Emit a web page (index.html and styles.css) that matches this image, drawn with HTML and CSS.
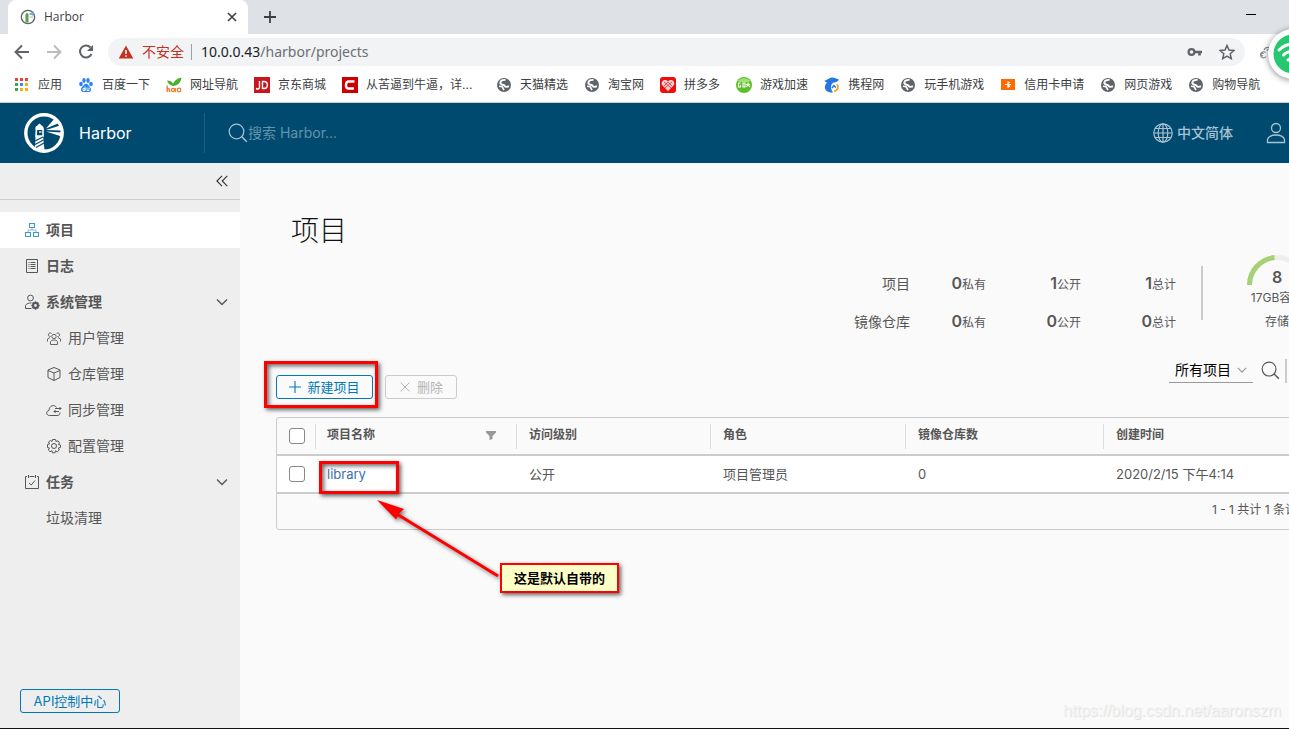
FILE: index.html
```html
<!DOCTYPE html>
<html lang="zh-CN">
<head>
<meta charset="utf-8">
<title>Harbor</title>
<link rel="stylesheet" href="styles.css">
</head>
<body>
<svg class="defs" width="0" height="0" aria-hidden="true">
  <symbol id="globe-solid" viewBox="0 0 16 16">
    <circle cx="8" cy="8" r="7" fill="#5f6368"/>
    <path d="M9.500 3C7 2.500 4.500 3.800 4.300 5.800 4.200 7.500 6 7.800 7.500 8c1.500.3 1.200 1.800 2.500 1.900 1 .1 2-.7 3-.4" fill="none" stroke="#fff" stroke-width="1.900"/>
    <path d="M3 9.300c1.500 0 3.500.2 3.700 1.200.2.900.6 1.300 1.300 2.700" fill="none" stroke="#fff" stroke-width="1.600"/>
  </symbol>
  <symbol id="chevron" viewBox="0 0 12 12"><path d="M1 3.500l5 5 5-5" fill="none" stroke="currentColor" stroke-width="1.400"/></symbol>
  <symbol id="magnifier" viewBox="0 0 20 20"><circle cx="8.500" cy="8.500" r="7.300" fill="none" stroke="currentColor" stroke-width="1.200"/><path d="M13.800 13.800l5 5" stroke="currentColor" stroke-width="1.500"/></symbol>
</svg>

<header class="tabstrip">
  <div class="tab">
    <svg width="16" height="16" viewBox="0 0 16 16"><circle cx="8" cy="8" r="6.700" fill="#fff" stroke="#5b6468" stroke-width="1.300"/><path d="M5.500 5.500l1.500-2 1.500 2v8h-3z" fill="#60a043"/><path d="M9 4.500l4.500-1.500 1 4-5-1.500z" fill="#7ba8c9"/><path d="M9.500 8h4" stroke="#9fc0d6"/></svg>
    <span class="tab-title">Harbor</span>
    <button class="plain" aria-label="关闭标签页"><svg width="10" height="10" viewBox="0 0 10 10"><path d="M1 1l8 8M9 1l-8 8" stroke="#3c4043" stroke-width="1.600"/></svg></button>
  </div>
  <button class="plain new-tab" aria-label="新标签页"><svg width="12" height="12" viewBox="0 0 12 12"><path d="M6 0v12M0 6h12" stroke="#3c4043" stroke-width="1.800"/></svg></button>
  <button class="plain minimize" aria-label="最小化"><svg width="10" height="10" viewBox="0 0 10 10"><path d="M0 2.500h10" stroke="#000"/></svg></button>
</header>

<div class="toolbar">
  <button class="plain" aria-label="后退"><svg width="16" height="16" viewBox="0 0 16 16"><path d="M15 8H2M8 1.500L1.500 8 8 14.500" fill="none" stroke="#5f6368" stroke-width="1.900"/></svg></button>
  <button class="plain" aria-label="前进"><svg width="16" height="16" viewBox="0 0 16 16"><path d="M1 8h13M8 1.500L14.500 8 8 14.500" fill="none" stroke="#babcbe" stroke-width="1.900"/></svg></button>
  <button class="plain" aria-label="重新加载"><svg width="16" height="16" viewBox="0 0 16 16"><path d="M13.500 10a6 6 0 1 1-1-6.500" fill="none" stroke="#5f6368" stroke-width="2"/><path d="M15 1v6H9z" fill="#5f6368"/></svg></button>
  <div class="omnibox">
    <svg width="16" height="16" viewBox="0 0 16 16"><path d="M8 1.500L15.300 14.500H.7z" fill="#c5301f"/><path d="M8 6v4M8 11.300v1.500" stroke="#fff" stroke-width="1.500"/></svg>
    <span class="insecure">不安全</span>
    <span class="url"><span class="host">10.0.0.43</span>/harbor/projects</span>
    <svg class="key" width="16" height="16" viewBox="0 0 16 16"><circle cx="4.500" cy="8" r="2.900" fill="none" stroke="#5f6368" stroke-width="2.200"/><path d="M7 8h8M12.500 8v3.500" stroke="#5f6368" stroke-width="2.600"/></svg>
    <svg width="16" height="16" viewBox="0 0 16 16"><path d="M8 1.500l2 4.500 4.900.5-3.700 3.300 1.100 4.900L8 12.200l-4.300 2.500 1.100-4.900L1.100 6.500 6 6z" fill="none" stroke="#5f6368" stroke-width="1.500"/></svg>
  </div>
  <svg class="extension" width="20" height="16" viewBox="0 0 20 16"><path d="M9 12.500a3 3 0 1 1-.5-4M6 11.500a1.200 1.200 0 1 1 .5-1.500M7 6a4 4 0 0 1 7.500 0M10 7a2 2 0 1 1 2 2" fill="none" stroke="#8b8d90" stroke-width="1.200"/></svg>
</div>

<nav class="bookmarks" aria-label="书签">
  <a href="#"><svg width="16" height="16" viewBox="0 0 16 16"><path d="M1 1h3v3H1zM6 1h3v3H6zM1 6h3v3H1z" fill="#ea4335"/><path d="M11 1h3v3h-3z" fill="#ea4335"/><path d="M6 11h3v3H6zM11 11h3v3h-3zM11 6h3v3h-3z" fill="#fbae04"/><path d="M6 6h3v3H6z" fill="#4285f4"/><path d="M1 6h3v3H1zM1 11h3v3H1z" fill="#34a853"/></svg>应用</a>
  <a href="#"><svg width="16" height="16" viewBox="0 0 16 16" fill="#2b84f0"><ellipse cx="3" cy="7" rx="1.800" ry="2.300"/><ellipse cx="6" cy="3.500" rx="1.700" ry="2.400"/><ellipse cx="10" cy="3.500" rx="1.700" ry="2.400"/><ellipse cx="13" cy="7" rx="1.800" ry="2.300"/><path d="M8 6.700c2 0 2.500 2 4 3.500 2 2 1 5-1.500 4.800H5.500C3 15 2 12 4 10.200 5.500 8.700 6 6.700 8 6.700z"/><path d="M5 11.500h2v2H5zM7 9.500v4M9 10.500v3h2v-3" fill="none" stroke="#fff" stroke-width=".9"/></svg>百度一下</a>
  <a href="#"><svg width="16" height="16" viewBox="0 0 16 16"><path d="M7 9C4 8.500 2 6.500 1 3.500c3 0 5 1 6 3C9 3 11.500 1 15.500.5 15 5 12 9 7 9z" fill="#4faf2f"/><path d="M1.200 8.500v6.500M1.200 12.500c.8-1.500 2.300-1 2.300.5v2M9.200 11v4" fill="none" stroke="#f47a2b" stroke-width="1.400"/><circle cx="7" cy="13" r="1.600" fill="none" stroke="#f47a2b" stroke-width="1.300"/><circle cx="13" cy="13" r="1.800" fill="none" stroke="#f47a2b" stroke-width="1.300"/></svg>网址导航</a>
  <a href="#"><svg width="16" height="16" viewBox="0 0 16 16"><path d="M0 0h16v16H0z" fill="#c9151e"/><path d="M5.500 4v6c0 2-1.500 2.500-3.500 1.500M8.500 4.500v7H10c4.500 0 4.500-7 0-7z" fill="none" stroke="#fff" stroke-width="1.400"/></svg>京东商城</a>
  <a class="wide" href="#"><svg width="16" height="16" viewBox="0 0 16 16"><path d="M0 0h16v16H0z" fill="#c00"/><path d="M12.500 4.500H6.500C3.500 4.500 3 11.500 6 11.500h6" fill="none" stroke="#fff" stroke-width="2.400"/></svg>从苦逼到牛逼，详...</a>
  <a href="#"><svg width="16" height="16"><use href="#globe-solid"/></svg>天猫精选</a>
  <a href="#"><svg width="16" height="16"><use href="#globe-solid"/></svg>淘宝网</a>
  <a href="#"><svg width="16" height="16" viewBox="0 0 16 16"><rect width="16" height="16" rx="3" fill="#f20d0d"/><path d="M8 14L2 8c-1.500-4 3-7 6-3.500C11 1 15.500 4 14 8z" fill="#fbd5d5"/><path d="M4 5l7 6M8 5l4 4M12 5l-7 6M8 5L4 9" stroke="#e33" stroke-width=".9"/></svg>拼多多</a>
  <a href="#"><svg width="16" height="16" viewBox="0 0 16 16"><circle cx="8" cy="8" r="8" fill="#5cc02b"/><path d="M2 3.500Q8-1 14 3.500L13 5H3z" fill="#a3e070"/><path d="M4.500 6H2.500v4h2V8M7 6v4h2V6zM12 5.500v2L10.500 10M10 7.500h4M12 7.500l2 2.500" fill="none" stroke="#fff" stroke-width="1.100"/></svg>游戏加速</a>
  <a href="#"><svg width="16" height="16" viewBox="0 0 16 16"><path d="M.5 3.500C3 3.500 4 1 8 .5c3 0 4.500 1.500 7 2-1 2-3 3-5 3C6.500 6.500 6 11 9 15.500 4 16 0 13 1 9c.3-1.500 1.500-2.500 2-3.500-1 0-2-.8-2.500-2z" fill="#2577e3"/><path d="M8 11l2-2.500 2 2" fill="none" stroke="#2577e3" stroke-width="1.500"/><path d="M13 7c2 3 1 6-3 7.500" fill="none" stroke="#f5a623" stroke-width="1.800"/></svg>携程网</a>
  <a href="#"><svg width="16" height="16"><use href="#globe-solid"/></svg>玩手机游戏</a>
  <a href="#"><svg width="16" height="16" viewBox="0 0 16 16"><path d="M1 2h14v11H1z" fill="#ff6a00"/><path d="M8 4.500v6.500M5 7.500h6M8 5.500h2M8 8l2 1.500" stroke="#fff" stroke-width="1.100"/></svg>信用卡申请</a>
  <a href="#"><svg width="16" height="16"><use href="#globe-solid"/></svg>网页游戏</a>
  <a href="#"><svg width="16" height="16"><use href="#globe-solid"/></svg>购物导航</a>
</nav>

<header class="app-header">
  <a class="brand" href="#">
    <svg width="40" height="40" viewBox="0 0 40 40"><circle cx="20" cy="20" r="18.200" fill="none" stroke="#fff" stroke-width="3.400"/><path d="M15.500 10.500l4 3.500v3h-8v-3z" fill="#fff"/><path d="M12.500 16h6.500v7h-7z" fill="none" stroke="#fff" stroke-width="1.600"/><path d="M15 19h2.500" stroke="#fff" stroke-width="1.300"/><path d="M11.500 23H19l1.500 14-9.500-1z" fill="#fff"/><path d="M11 28l8-4M11 31.500l8.500-4.500M12 34.500l8-4.500" stroke="#004a70" stroke-width="1.200"/><path d="M22 15.500L31 5l4 5zM22 17l14-4.500 1.500 5zM22 18.500l15.500 1v4z" fill="#fff"/></svg>
    <span class="brand-name">Harbor</span>
  </a>
  <label class="search">
    <svg width="20" height="20"><use href="#magnifier"/></svg>
    <input type="text" placeholder="搜索 Harbor..." aria-label="搜索 Harbor">
  </label>
  <button class="plain header-btn"><svg width="20" height="20" viewBox="0 0 20 20"><g fill="none" stroke="currentColor" stroke-width="1.200"><circle cx="10" cy="10" r="9.200"/><ellipse cx="10" cy="10" rx="4.800" ry="9.200"/><path d="M10 1v18M1 10h18M2.500 5.500h15M2.500 14.500h15"/></g></svg>中文简体</button>
  <button class="plain header-btn user" aria-label="用户"><svg width="20" height="22" viewBox="0 0 20 22"><g fill="none" stroke="currentColor" stroke-width="1.300"><circle cx="10" cy="6" r="4.500"/><path d="M1.500 20.500v-3c1-3 4.500-4.500 8.500-4.500s7.500 1.500 8.500 4.500v3z"/></g></svg></button>
</header>

<div class="workspace">
  <aside class="sidebar">
    <button class="plain collapse" aria-label="收起"><svg width="12" height="12" viewBox="0 0 12 12"><path d="M6 .8L.9 6 6 11.200M11.300.8L6.200 6l5.100 5.200" fill="none" stroke="#333" stroke-width="1.100"/></svg></button>
    <nav class="menu">
      <a class="item active" href="#"><svg width="16" height="16" viewBox="0 0 16 16"><g fill="none" stroke="#3f97c9" stroke-width="1.100"><path d="M5.500 1.500h5v4h-5zM1.500 10.500h5v4h-5zM9.500 10.500h5v4h-5z"/><path d="M8 5.500V8M4 10.500V8h8v2.500" opacity=".6"/></g></svg>项目</a>
      <a class="item" href="#"><svg width="16" height="16" viewBox="0 0 16 16"><g fill="none" stroke="currentColor"><path d="M2.500 1.500h11v13h-11z"/><path d="M4.500 4.500h1M6.500 4.500h5M4.500 6.500h1M6.500 6.500h5M4.500 8.500h1M6.500 8.500h5M4.500 10.500h1M6.500 10.500h5"/></g></svg>日志</a>
      <a class="item" href="#"><svg width="16" height="16" viewBox="0 0 16 16"><circle cx="6.500" cy="4" r="2.900" fill="none" stroke="currentColor"/><path d="M7.500 14.500h-6v-3C2.500 9.500 5 8.800 7.500 9" fill="none" stroke="currentColor"/><circle cx="11.500" cy="11.500" r="2.400" fill="none" stroke="currentColor" stroke-width="2"/><path d="M11.500 7.300v2M11.500 13.700v2M7.300 11.500h2M13.700 11.500h2M8.600 8.600l1.300 1.300M13.100 13.100l1.300 1.300M14.400 8.600l-1.300 1.300M9.900 13.100l-1.300 1.300" stroke="currentColor" stroke-width="1.500"/></svg><span>系统管理</span><svg class="caret" width="12" height="12"><use href="#chevron"/></svg></a>
      <a class="item sub" href="#"><svg width="16" height="16" viewBox="0 0 16 16"><g fill="none" stroke="currentColor" stroke-width=".9"><circle cx="8" cy="6.500" r="2.200"/><path d="M4.500 14.500v-3c1.500-2 5.500-2 7 0v3zM5.500 3.500A1.800 1.800 0 1 0 4.500 6.500M10.500 3.500a1.800 1.800 0 1 1 1 3M1.500 11.500V9L4 7.500M14.500 11.500V9L12 7.500"/></g></svg>用户管理</a>
      <a class="item sub" href="#"><svg width="16" height="16" viewBox="0 0 16 16"><path d="M8 1.500l6 2.500v7.500L8 14.500l-6-3V4zM2 4.500L8 7l6-2.500M8 7v7.500" fill="none" stroke="currentColor"/></svg>仓库管理</a>
      <a class="item sub" href="#"><svg width="16" height="16" viewBox="0 0 16 16"><path d="M14 10.500c0 2-1 3-3 3H3.500C0 13.500-.3 9 3 8.500 3 3.500 8.500 2 10.500 5.500M9 6.500h6M13.500 5L15 6.500 13.500 8M13 9.500H8M9.500 8L8 9.500 9.500 11" fill="none" stroke="currentColor"/></svg>同步管理</a>
      <a class="item sub" href="#"><svg width="16" height="16" viewBox="0 0 16 16"><g fill="none" stroke="currentColor"><circle cx="8" cy="8" r="2.500"/><path d="M6.500 1.500h3l.5 2 2-.7 1.500 2L12.300 6.500l2.200.5v2.500l-2.200.5 1 2-2 1.800-1.800-1-.5 2H6.500L6 12.700l-2 1L2.300 12l1.200-2-2-.5v-3l2-.5-1-2L4.500 2.500 6 3.500z"/></g></svg>配置管理</a>
      <a class="item" href="#"><svg width="16" height="16" viewBox="0 0 16 16"><path d="M3 2.500H1.500v12h13v-12H13M5.500 2.500h5M4.500 1v3M11.500 1v3M5 9l2.200 2L11 6.500" fill="none" stroke="currentColor"/></svg><span>任务</span><svg class="caret" width="12" height="12"><use href="#chevron"/></svg></a>
      <a class="item leaf" href="#">垃圾清理</a>
    </nav>
    <button class="btn api">API控制中心</button>
  </aside>

  <main class="content">
    <h1>项目</h1>
    <section class="stats">
      <dl class="counts">
        <dt>项目</dt><dd><b>0</b>私有</dd><dd><b>1</b>公开</dd><dd><b>1</b>总计</dd>
        <dt>镜像仓库</dt><dd><b>0</b>私有</dd><dd><b>0</b>公开</dd><dd><b>0</b>总计</dd>
      </dl>
      <div class="quota">
        <div class="gauge">
          <svg width="60" height="30" viewBox="0 0 60 30"><path d="M2.500 30a27.500 27.500 0 0 1 55 0" fill="none" stroke="#eee" stroke-width="5"/><path d="M2.500 30A27.500 27.500 0 0 1 27.500 2.600" fill="none" stroke="#a5d274" stroke-width="5"/></svg>
          <b class="gauge-value">8</b>
        </div>
        <span>17GB容量</span>
        <span class="quota-name">存储</span>
      </div>
    </section>

    <div class="actions">
      <button class="btn"><svg width="12" height="12" viewBox="0 0 12 12"><path d="M6 0v12M0 6h12" stroke="currentColor" stroke-width="1.100"/></svg>新建项目</button>
      <button class="btn" disabled><svg width="12" height="12" viewBox="0 0 12 12"><path d="M1.500 1.500l9 9M10.500 1.500l-9 9" stroke="currentColor"/></svg>删除</button>
      <div class="filters">
        <label class="picker">
          <select aria-label="项目范围"><option>所有项目</option></select>
          <svg width="10" height="10"><use href="#chevron"/></svg>
        </label>
        <button class="plain find" aria-label="搜索"><svg width="19" height="19"><use href="#magnifier"/></svg></button>
      </div>
    </div>

    <div class="grid">
      <table>
        <colgroup><col class="c-check"><col class="c-name"><col class="c-access"><col class="c-role"><col class="c-repos"><col></colgroup>
        <thead>
          <tr>
            <th><input type="checkbox" aria-label="全选"></th>
            <th><div class="head">项目名称<svg class="funnel" width="10" height="9" viewBox="0 0 10 9"><path d="M0 0h10v1.500L6.500 5v3L3.500 9V5L0 1.500z" fill="#999"/></svg></div></th>
            <th><div class="head">访问级别</div></th>
            <th><div class="head">角色</div></th>
            <th><div class="head">镜像仓库数</div></th>
            <th><div class="head">创建时间</div></th>
          </tr>
        </thead>
        <tbody>
          <tr>
            <td><input type="checkbox" aria-label="选择 library"></td>
            <td><a href="#">library</a></td>
            <td>公开</td>
            <td>项目管理员</td>
            <td>0</td>
            <td>2020/2/15 下午4:14</td>
          </tr>
        </tbody>
      </table>
      <div class="grid-footer">1 - 1 共计 1 条记录</div>
    </div>
  </main>
</div>

<div class="mark mark-create"></div>
<div class="mark mark-library"></div>
<svg class="arrow" width="130" height="90" viewBox="0 0 130 90"><path d="M20 13.500L122 76" stroke="#f00" stroke-width="3"/><path d="M1 0l27 9-5 4.500-3 6z" fill="#f00"/></svg>
<div class="note">这是默认自带的</div>
<div class="watermark">https://blog.csdn.net/aaronszm</div>
<svg class="wifi" width="50" height="50" viewBox="0 0 50 50"><circle cx="25" cy="25" r="25" fill="#fff"/><circle cx="25" cy="25" r="19.500" fill="#27c76f"/><path d="M11 21c8-8 20-8 28 0M15.500 26c5.500-5.500 13.500-5.500 19 0M20 31c3-3 7-3 10 0" fill="none" stroke="#fff" stroke-width="3" stroke-linecap="round"/></svg>
</body>
</html>
```
FILE: styles.css
```css
* { box-sizing: border-box; }

body {
  position: relative;
  display: flex;
  flex-direction: column;
  min-height: 100vh;
  margin: 0;
  overflow: hidden;
  border-bottom: 1px solid #111;
  background: #fafafa;
  color: #565656;
  font: 14px/20px Inter, "Noto Sans CJK SC", sans-serif;
  white-space: nowrap;
}

svg { flex: none; display: block; }
a { color: inherit; text-decoration: none; }
.defs { position: absolute; }

.plain {
  display: flex;
  align-items: center;
  padding: 0;
  border: 0;
  background: none;
  color: inherit;
  font: inherit;
}

/* Browser chrome */
.tabstrip {
  display: flex;
  align-items: center;
  height: 34px;
  padding: 0 33px 0 8px;
  background: #dee1e6;
}
.tab {
  display: flex;
  align-items: center;
  gap: 8px;
  width: 240px;
  height: 34px;
  padding: 0 11px 0 12px;
  border-radius: 8px 8px 0 0;
  background: #fff;
  color: #3c4043;
  font: 12px/16px "Open Sans", sans-serif;
}
.tab-title { flex: 1; }
.new-tab { margin-left: 16px; }
.minimize { margin-left: auto; }

.toolbar {
  display: flex;
  align-items: center;
  gap: 16px;
  height: 36px;
  padding-left: 14px;
  background: #fff;
}
.omnibox {
  display: flex;
  flex: 1;
  align-items: center;
  gap: 8px;
  height: 28px;
  margin-left: -2px;
  padding: 0 10px;
  border-radius: 14px;
  background: #f1f3f4;
}
.insecure {
  padding-right: 7px;
  border-right: 1px solid #9aa0a6;
  color: #c5301f;
  line-height: 16px;
}
.url { flex: 1; padding-left: 1px; color: #6b7075; font: 14px/20px "Noto Sans", sans-serif; }
.host { color: #202124; }
.key { margin-right: 8px; }
.extension { margin: 0 12px 0 -4px; }

.bookmarks {
  display: flex;
  align-items: center;
  gap: 16px;
  height: 33px;
  padding: 0 14px 3px;
  border-bottom: 1px solid #ccc;
  background: #fff;
  color: #3c4043;
  font-size: 12px;
}
.bookmarks a { display: flex; align-items: center; gap: 8px; }
.bookmarks .wide { width: 138px; }

/* Application header */
.app-header {
  display: flex;
  align-items: center;
  height: 60px;
  padding-left: 24px;
  background: #004a70;
  color: #a9c2d0;
}
.brand {
  display: flex;
  align-items: center;
  gap: 15px;
  width: 181px;
  height: 40px;
  border-right: 1px solid #1f6080;
}
.brand-name { color: #fff; font-size: 16px; }
.search { display: flex; flex: 1; align-items: center; padding-left: 23px; }
.search input {
  flex: 1;
  padding: 0;
  border: 0;
  outline: 0;
  background: none;
  color: #fff;
  font: inherit;
}
.search input::placeholder { color: #6592a9; }
.header-btn { gap: 4px; font-weight: 500; }
.user { margin: 0 3px 0 33px; }

/* Sidebar */
.workspace { display: flex; flex: 1; }
.sidebar {
  display: flex;
  flex: none;
  flex-direction: column;
  align-items: stretch;
  width: 240px;
  padding-bottom: 15px;
  background: #eee;
}
.collapse {
  justify-content: flex-end;
  height: 37px;
  padding-right: 12px;
  border-bottom: 1px solid #ccc;
}
.menu { flex: 1; padding-top: 12px; }
.item {
  display: flex;
  align-items: center;
  gap: 6px;
  height: 36px;
  padding: 0 12px 0 24px;
  font-weight: 600;
}
.active { background: #fff; }
.sub { padding-left: 46px; font-weight: 400; }
.leaf { padding-left: 46px; font-weight: 400; }
.caret { margin-left: auto; }

.btn {
  display: flex;
  align-items: center;
  justify-content: center;
  gap: 6px;
  height: 24px;
  padding: 0 8px;
  border: 1px solid #0079b8;
  border-radius: 3px;
  background: none;
  color: #0079b8;
  font: 13px/20px Inter, "Noto Sans CJK SC", sans-serif;
}
.btn:disabled { border-color: #ccc; color: #b5b5b5; }
.api { align-self: flex-start; width: 100px; margin-left: 20px; }

/* Project page */
.content { flex: 1; min-width: 0; padding: 48px 0 0 36px; }
h1 {
  margin: 0;
  padding-left: 15px;
  color: #111;
  font: 300 28px/36px "Noto Sans CJK SC", sans-serif;
}
.stats {
  display: flex;
  justify-content: flex-end;
  height: 86px;
  margin: 8px -18px 17px 0;
}
.counts {
  display: grid;
  grid-template-columns: 80px 76px 95px 95px;
  grid-auto-rows: 38px;
  align-items: center;
  margin: 10px 25px 0 0;
  text-align: right;
}
.counts dd { margin: 0; font-size: 12px; }
.counts b { font-size: 16px; font-weight: 600; }
.quota {
  display: flex;
  flex-direction: column;
  align-items: center;
  width: 106px;
  padding-left: 46px;
  background: linear-gradient(#ccc, #ccc) 0 11px / 2px 54px no-repeat;
  font-size: 12px;
}
.quota-name { margin-top: 4px; }
.gauge { position: relative; width: 60px; height: 33px; }
.gauge-value {
  position: absolute;
  inset: 12px 0 auto;
  font-size: 16px;
  font-weight: 600;
  text-align: center;
}

.actions { display: flex; align-items: flex-end; gap: 12px; height: 41px; }
.actions .btn { width: 97px; }
.actions .btn:disabled { width: 72px; }
.filters {
  display: flex;
  align-self: flex-start;
  align-items: center;
  gap: 8px;
  height: 25px;
  margin-left: auto;
  padding-right: 2px;
}
.picker {
  display: flex;
  align-items: center;
  width: 84px;
  height: 24px;
  border-bottom: 1px solid #999;
  color: #999;
}
.picker select {
  width: 68px;
  padding: 0 0 0 6px;
  border: 0;
  appearance: none;
  background: none;
  color: #000;
  font: inherit;
}
.find { height: 24px; padding-right: 5px; border-right: 2px solid #ccc; }

.grid {
  margin: 18px -40px 0 0;
  border: 1px solid #ccc;
  border-radius: 3px;
}
table { width: 100%; border-collapse: collapse; table-layout: fixed; }
.c-check { width: 38px; }
.c-name { width: 201px; }
.c-access { width: 194px; }
.c-role { width: 195px; }
.c-repos { width: 198px; }
th, td { padding: 0 0 0 12px; text-align: left; }
th { height: 37px; border-bottom: 2px solid #ccc; font-size: 12px; font-weight: 600; }
th:not(:first-child) { padding-left: 0; }
td { height: 38px; padding: 0 0 1px 13px; border-bottom: 2px solid #ccc; background: #fff; font-size: 13px; }
td:first-child { padding-left: 12px; }
td a { color: #3c6fa8; }
.head {
  display: flex;
  align-items: center;
  height: 25px;
  padding: 0 20px 2px 12px;
  border-left: 1px solid #ddd;
}
th:nth-child(2) .head { padding-left: 11px; }
td:nth-child(2) { padding-left: 12px; }
.funnel { margin-left: auto; }
input[type="checkbox"] {
  display: block;
  width: 16px;
  height: 16px;
  margin: 0;
  border: 1px solid #888;
  border-radius: 3px;
  appearance: none;
  background: #fff;
}
.grid-footer { height: 35px; padding: 6px 19px 0; font-size: 12px; text-align: right; }

/* Annotations over the page */
.mark {
  position: absolute;
  border: 3px solid #f00;
  box-shadow: 2px 2px 4px #0009, inset 2px 2px 4px #0009;
}
.mark-create { left: 264px; top: 361px; width: 114px; height: 47px; }
.mark-library { left: 319px; top: 461px; width: 80px; height: 33px; }
.arrow { position: absolute; left: 376px; top: 500px; filter: drop-shadow(2px 2px 2px #0008); }
.note {
  position: absolute;
  left: 500px;
  top: 563px;
  width: 119px;
  height: 30px;
  border: 2px solid #f00;
  background: #ffffc8;
  box-shadow: 2px 2px 4px #0009;
  color: #000;
  font: bold 13px/26px "Noto Sans CJK SC", sans-serif;
  text-align: center;
}
.watermark {
  position: absolute;
  right: 8px;
  bottom: 7px;
  color: #f4f4f4;
  font: 16px/20px "Liberation Sans", sans-serif;
  text-shadow: 1px 1px 1px #ddd;
}
.wifi { position: absolute; right: -29px; top: 29px; filter: drop-shadow(0 1px 3px #0007); }
```
